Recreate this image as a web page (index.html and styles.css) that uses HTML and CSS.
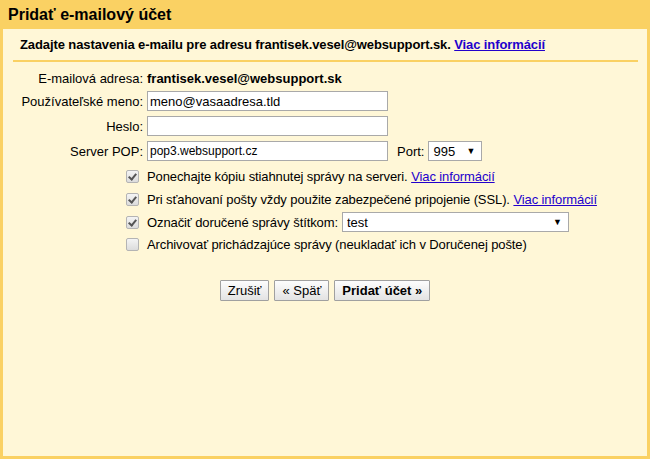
FILE: index.html
```html
<!DOCTYPE html>
<html lang="sk">
<head>
    <meta charset="UTF-8">
    <title>Pridať e-mailový účet</title>
    <link rel="stylesheet" href="styles.css">
</head>
<body>
    <div class="dialog">
        <h1 class="title">Pridať e-mailový účet</h1>

        <div class="content">
            <p class="intro">
                Zadajte nastavenia e-mailu pre adresu frantisek.vesel@websupport.sk.
                <a href="#" class="link">Viac informácií</a>
            </p>
            <div class="separator"></div>

            <form class="account-form">
                <div class="row info-row">
                    <span class="label">E-mailová adresa:</span>
                    <span class="value">frantisek.vesel@websupport.sk</span>
                </div>

                <div class="row field-row">
                    <label class="label" for="username">Používateľské meno:</label>
                    <input type="text" id="username" class="text-input" value="meno@vasaadresa.tld">
                </div>

                <div class="row field-row">
                    <label class="label" for="password">Heslo:</label>
                    <input type="password" id="password" class="text-input">
                </div>

                <div class="row field-row">
                    <label class="label" for="server">Server POP:</label>
                    <input type="text" id="server" class="text-input small" value="pop3.websupport.cz">
                    <label class="port-label" for="port">Port:</label>
                    <span class="select-box port-select">
                        <select id="port">
                            <option>995</option>
                            <option>110</option>
                        </select>
                        <span class="arrow">▼</span>
                    </span>
                </div>

                <div class="row check-row first">
                    <span class="label"><input type="checkbox" class="check" checked></span>
                    <span class="check-text">Ponechajte kópiu stiahnutej správy na serveri. <a href="#" class="link">Viac informácií</a></span>
                </div>

                <div class="row check-row">
                    <span class="label"><input type="checkbox" class="check" checked></span>
                    <span class="check-text">Pri sťahovaní pošty vždy použite zabezpečené pripojenie (SSL). <a href="#" class="link">Viac informácií</a></span>
                </div>

                <div class="row check-row">
                    <span class="label"><input type="checkbox" class="check" checked></span>
                    <span class="check-text">Označiť doručené správy štítkom:</span>
                    <span class="select-box label-select">
                        <select>
                            <option>test</option>
                        </select>
                        <span class="arrow">▼</span>
                    </span>
                </div>

                <div class="row check-row last">
                    <span class="label"><input type="checkbox" class="check"></span>
                    <span class="check-text">Archivovať prichádzajúce správy (neukladať ich v Doručenej pošte)</span>
                </div>

                <div class="buttons">
                    <button type="button" class="btn">Zrušiť</button>
                    <button type="button" class="btn">« Späť</button>
                    <button type="submit" class="btn primary">Pridať účet »</button>
                </div>
            </form>
        </div>
    </div>
</body>
</html>
```

FILE: styles.css
```css
:root {
    --frame-color: #fad163;
    --panel-color: #fff7d7;
    --link-color: #2200cc;
    --input-border: #a9a9a9;
}

body {
    margin: 0;
    font-family: "Liberation Sans", Arial, sans-serif;
    font-size: 13px;
    color: #000;
}

.dialog {
    display: flex;
    flex-direction: column;
    height: 459px;
    box-sizing: border-box;
    padding: 0 3px 3px 3px;
    background: var(--frame-color);
}

.title {
    margin: 0;
    height: 29px;
    line-height: 30px;
    padding-left: 5px;
    font-size: 16px;
    font-weight: bold;
}

.content {
    flex: 1;
    background: var(--panel-color);
}

.intro {
    margin: 0;
    padding: 8px 17px 0;
    line-height: 15px;
    font-weight: bold;
    letter-spacing: -0.1px;
}

.link {
    color: var(--link-color);
    text-decoration: underline;
    font-weight: normal;
}

.intro .link {
    font-weight: bold;
}

.separator {
    height: 2px;
    margin: 8px 9px 0 10px;
    background: var(--frame-color);
}

.account-form {
    margin-top: 9px;
}

.row {
    display: flex;
    align-items: center;
}

.label {
    width: 140px;
    margin-right: 4px;
    text-align: right;
    flex-shrink: 0;
}

.info-row {
    height: 15px;
}

.value {
    font-weight: bold;
}

.field-row {
    height: 20px;
    margin-top: 5px;
}

.text-input {
    width: 241px;
    height: 20px;
    box-sizing: border-box;
    margin: 0;
    padding: 0 2px;
    border: 1px solid var(--input-border);
    background: #fff;
    font-family: inherit;
    font-size: 13px;
    color: #000;
}

.text-input.small {
    font-size: 12px;
}

.port-label {
    margin: 0 4px 0 9px;
}

.select-box {
    position: relative;
    display: inline-block;
    height: 20px;
}

.select-box select {
    appearance: none;
    -webkit-appearance: none;
    width: 100%;
    height: 20px;
    margin: 0;
    padding: 0 4px;
    border: 1px solid var(--input-border);
    border-radius: 0;
    background: #fff;
    font-family: inherit;
    font-size: 13px;
    color: #000;
}

.select-box .arrow {
    position: absolute;
    right: 7px;
    top: 4px;
    font-size: 9px;
    line-height: 12px;
    pointer-events: none;
}

.port-select {
    width: 54px;
}

.label-select {
    width: 227px;
    margin-left: 4px;
}

.check-row {
    height: 20px;
    margin-top: 3px;
}

.check-row.first {
    margin-top: 5px;
}

.check-row.last {
    margin-top: 2px;
}

.check-row .label {
    display: flex;
    justify-content: flex-end;
}

.check-text {
    letter-spacing: -0.1px;
}

.check {
    appearance: none;
    -webkit-appearance: none;
    position: relative;
    width: 13px;
    height: 13px;
    margin: 0 4px 0 0;
    border: 1px solid #b4b4b4;
    border-radius: 2px;
    background: linear-gradient(#f4f4f4, #dcdcdc);
    box-sizing: border-box;
}

.check:checked::after {
    content: "";
    position: absolute;
    left: 3px;
    top: 1px;
    width: 3px;
    height: 6px;
    border: solid #555;
    border-width: 0 2px 2px 0;
    transform: rotate(40deg);
}

.buttons {
    display: flex;
    justify-content: center;
    gap: 5px;
    margin-top: 26px;
}

.btn {
    height: 21px;
    margin: 0;
    padding: 0 7px;
    border: 1px solid #a0a0a0;
    border-radius: 1px;
    background: linear-gradient(#fdfdfd, #e3e3e3);
    font-family: inherit;
    font-size: 13px;
    color: #000;
}

.btn.primary {
    font-weight: bold;
}
```
